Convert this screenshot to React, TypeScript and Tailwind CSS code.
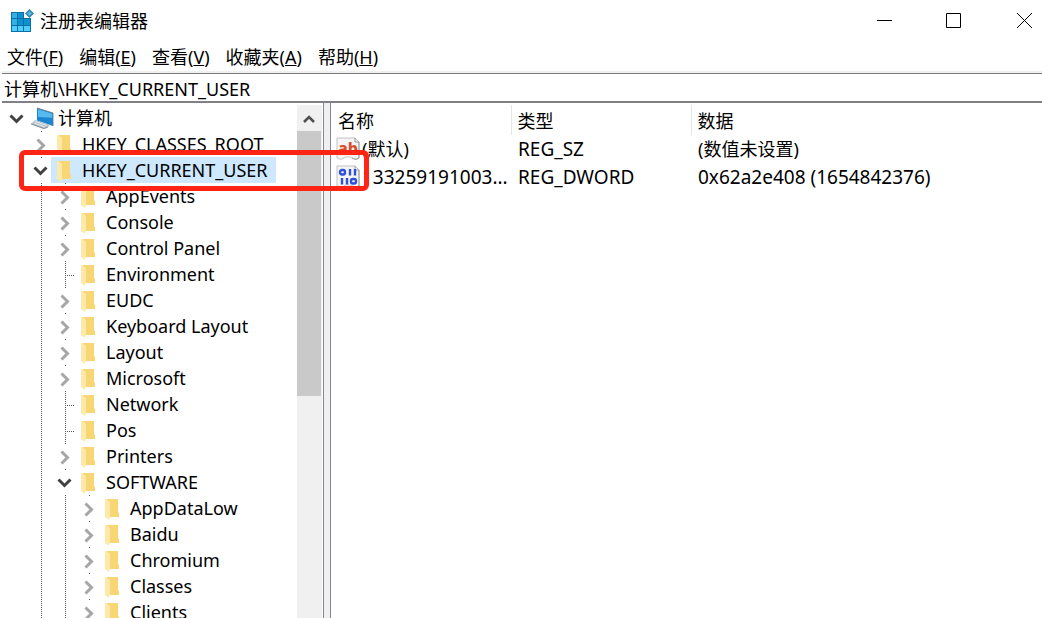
import { useState } from "react";

type TreeNode = {
  name: string;
  level: number;
  state: "open" | "closed" | "leaf";
};

const tree: TreeNode[] = [
  { name: "计算机", level: 0, state: "open" },
  { name: "HKEY_CLASSES_ROOT", level: 1, state: "closed" },
  { name: "HKEY_CURRENT_USER", level: 1, state: "open" },
  { name: "AppEvents", level: 2, state: "closed" },
  { name: "Console", level: 2, state: "closed" },
  { name: "Control Panel", level: 2, state: "closed" },
  { name: "Environment", level: 2, state: "leaf" },
  { name: "EUDC", level: 2, state: "closed" },
  { name: "Keyboard Layout", level: 2, state: "closed" },
  { name: "Layout", level: 2, state: "closed" },
  { name: "Microsoft", level: 2, state: "closed" },
  { name: "Network", level: 2, state: "leaf" },
  { name: "Pos", level: 2, state: "leaf" },
  { name: "Printers", level: 2, state: "closed" },
  { name: "SOFTWARE", level: 2, state: "open" },
  { name: "AppDataLow", level: 3, state: "closed" },
  { name: "Baidu", level: 3, state: "closed" },
  { name: "Chromium", level: 3, state: "closed" },
  { name: "Classes", level: 3, state: "closed" },
  { name: "Clients", level: 3, state: "closed" },
];

const menus = [
  { label: "文件", key: "F" },
  { label: "编辑", key: "E" },
  { label: "查看", key: "V" },
  { label: "收藏夹", key: "A" },
  { label: "帮助", key: "H" },
];

const values = [
  { name: "(默认)", kind: "string", type: "REG_SZ", data: "(数值未设置)" },
  { name: "133259191003...", kind: "binary", type: "REG_DWORD", data: "0x62a2e408 (1654842376)" },
];

function RegistryLogo() {
  return (
    <svg width="24" height="24" viewBox="0 0 24 24" aria-hidden="true">
      <rect x="1" y="3" width="20" height="20" fill="#0b6fa8" />
      <path d="M2 4h5v5H2zM2 10h5v6H2z" fill="#2fb0e6" />
      <path d="M8 4h5v5H8zM8 10h5v6H8zM14 10h6v6h-6z" fill="#0c93cf" />
      <path d="M2 17h5v5H2zM8 17h5v5H8zM14 17h6v5h-6z" fill="#4fcdfb" />
      <path d="M14 2h8v7h-8z" fill="#fff" />
      <path d="M19.500 0L24 4.500 19.500 9 15 4.500z" fill="#2a86b8" />
      <path d="M19.500 2L22 4.500 19.500 7 17 4.500z" fill="#5db4dc" />
    </svg>
  );
}

function ComputerIcon() {
  return (
    <svg width="24" height="24" viewBox="0 0 24 24" aria-hidden="true">
      <path d="M7 2l16 5v13L7 14.500z" fill="#1b86d0" />
      <path d="M8 3.300l14.500 4.500v4L8 11z" fill="#56b9f0" />
      <path d="M7 2l16 5v13" fill="none" stroke="#5b7284" strokeWidth="0.800" />
      <path d="M1 18l4-4 15 5-2 2-4 2z" fill="#b4bfc8" />
      <path d="M1 18l13 4.500 4-1.500" fill="none" stroke="#83909a" />
      <path d="M4 17l11 4M5 15.500l12 4" stroke="#e6ebef" />
    </svg>
  );
}

function FolderIcon() {
  return (
    <svg width="14" height="22" viewBox="0 0 14 22" aria-hidden="true">
      <path d="M2 1h11v13l1 1v4H2z" fill="#f7d673" />
      <path d="M0 1h1l4 3v14l-1 4-4-3z" fill="#ffe9a8" />
    </svg>
  );
}

function PageShape() {
  return (
    <>
      <path d="M1 1h18l4 4v16c-3 2-5 1-7 0s-5-2-8 0-5 1-7 0z" fill="#f5f5f5" stroke="#c2c2c2" />
      <path d="M19 1v4h4M23 5v16c-3 2-5 1-7 0" fill="none" stroke="#9a9a9a" />
    </>
  );
}

function StringIcon() {
  return (
    <svg width="24" height="24" viewBox="0 0 24 24" aria-hidden="true">
      <PageShape />
      <text x="2" y="17" fontSize="16" fontWeight="800" fill="#d8512d">ab</text>
    </svg>
  );
}

function BinaryIcon() {
  return (
    <svg width="24" height="24" viewBox="0 0 24 24" aria-hidden="true">
      <PageShape />
      <g fill="none" stroke="#2f50da" strokeWidth="2.400">
        <rect x="4" y="5" width="5" height="4.500" rx="2" />
        <path d="M14 4v6.500M19 4v6.500M6 13v6.500M11 13v6.500" />
        <rect x="15" y="14" width="5" height="4.500" rx="2" />
      </g>
    </svg>
  );
}

function Branch({ level, state }: { level: number; state: TreeNode["state"] }) {
  return (
    <svg className="shrink-0" width="24" height="26" viewBox="0 0 24 26" aria-hidden="true">
      {state === "leaf" && (
        <path d="M14.500 0v26M16 14.500h10" stroke="#5c5c5c" strokeDasharray="1 1" />
      )}
      {state !== "leaf" && level > 0 && <path d="M14 0h1v1h-1z" fill="#5c5c5c" />}
      {state === "closed" && (
        <path d="M10.500 8.500l6 6-6 6" fill="none" stroke="#a6a6a6" strokeWidth="3" />
      )}
      {state === "open" && (
        <path d="M7.500 10.500l6 6 6-6" fill="none" stroke="#404040" strokeWidth="3" />
      )}
    </svg>
  );
}

function Guide({ dotted }: { dotted: boolean }) {
  return (
    <svg className="shrink-0" width="24" height="26" viewBox="0 0 24 26" aria-hidden="true">
      {dotted && <path d="M14.500 0v26" stroke="#5c5c5c" strokeDasharray="1 1" />}
    </svg>
  );
}

function TreeRow({ node, selected, onSelect }: { node: TreeNode; selected: boolean; onSelect: () => void }) {
  return (
    <li className="flex h-[26px]">
      {Array.from({ length: node.level }, (_, i) => (
        <Guide key={i} dotted={i > 0} />
      ))}
      <Branch level={node.level} state={node.state} />
      <button
        type="button"
        onClick={onSelect}
        className={`flex items-center whitespace-nowrap pr-2 ${selected ? "bg-[#cde8ff]" : ""}`}
      >
        {node.level === 0 ? (
          <span className="w-[31px] shrink-0 pl-[3px]"><ComputerIcon /></span>
        ) : (
          <span className="w-[31px] shrink-0 pl-[6px] pt-[2px]"><FolderIcon /></span>
        )}
        {node.name}
      </button>
    </li>
  );
}

function TitleBar() {
  return (
    <header className="flex h-[41px] shrink-0 items-center justify-between pl-[10px]">
      <h1 className="flex items-center gap-[6px]">
        <RegistryLogo />
        注册表编辑器
      </h1>
      <div className="flex">
        <button type="button" aria-label="最小化" className="flex h-10 w-[69px] items-center justify-center">
          <svg width="15" height="15" viewBox="0 0 15 15"><path d="M0 7.500h15" stroke="#000" /></svg>
        </button>
        <button type="button" aria-label="最大化" className="flex h-10 w-[69px] items-center justify-center">
          <svg width="15" height="15" viewBox="0 0 15 15"><path d="M.5.5h14v14H.5z" fill="none" stroke="#000" /></svg>
        </button>
        <button type="button" aria-label="关闭" className="flex h-10 w-[54px] items-center justify-end pr-[10px]">
          <svg width="15" height="15" viewBox="0 0 15 15"><path d="M0 0l15 15M15 0L0 15" stroke="#000" /></svg>
        </button>
      </div>
    </header>
  );
}

export default function App() {
  const [selected, setSelected] = useState("HKEY_CURRENT_USER");
  const [address, setAddress] = useState("计算机\\HKEY_CURRENT_USER");

  return (
    <div className="flex h-screen flex-col overflow-hidden bg-white font-['Noto_Sans','Noto_Sans_CJK_SC',sans-serif] text-[18px] leading-[26px] text-black">
      <TitleBar />
      <nav className="flex h-[30px] shrink-0 items-center gap-4 pl-[7px] pt-[2px]">
        {menus.map((menu) => (
          <button key={menu.key} type="button" className="whitespace-nowrap">
            {menu.label}(<span className="underline">{menu.key}</span>)
          </button>
        ))}
      </nav>
      <div className="ml-[2px] shrink-0 border-t-2 border-[#f0f0f0]">
        <input
          aria-label="地址"
          value={address}
          onChange={(e) => setAddress(e.target.value)}
          className="block h-[30px] w-full border-t border-b-2 border-t-[#7a7a7a] border-b-[#828087] px-[2px] outline-none"
        />
      </div>
      <main className="relative flex min-h-0 flex-1">
        <aside className="flex w-[324px] shrink-0 border-r border-[#828790] pl-[3px] pr-[1px] pt-[2px]">
          <ul className="min-w-0 flex-1 overflow-hidden">
            {tree.map((node) => (
              <TreeRow
                key={node.name}
                node={node}
                selected={node.name === selected}
                onSelect={() => setSelected(node.name)}
              />
            ))}
          </ul>
          <div className="flex w-[25px] shrink-0 flex-col bg-[#f0f0f0] pr-[1px]">
            <button type="button" aria-label="向上滚动" className="flex h-[26px] items-center justify-center pt-[2px]">
              <svg width="12" height="10" viewBox="0 0 12 10"><path d="M1 8l5-5 5 5" fill="none" stroke="#505050" strokeWidth="2.600" /></svg>
            </button>
            <div className="h-[265px] bg-[#c9c9c9]" />
          </div>
        </aside>
        <div className="w-[7px] shrink-0 border-r border-[#828790] bg-[#f0f0f0]" />
        <section className="min-w-0 flex-1 pt-[2px]">
          <table className="w-full table-fixed text-left">
            <thead>
              <tr className="h-[30px]">
                <th className="w-[180px] border-r border-[#e5e5e5] pl-[7px] pt-[2px] font-normal">名称</th>
                <th className="w-[180px] border-r border-[#e5e5e5] pl-[6px] pt-[2px] font-normal">类型</th>
                <th className="pl-[6px] pt-[2px] font-normal">数据</th>
              </tr>
            </thead>
            <tbody>
              {values.map((value) => (
                <tr key={value.name} className="h-[28px] whitespace-nowrap">
                  <td className="pl-[5px]">
                    <span className="flex items-center gap-[2px]">
                      {value.kind === "string" ? <StringIcon /> : <BinaryIcon />}
                      <span className={value.kind === "binary" ? "text-[19px]" : ""}>{value.name}</span>
                    </span>
                  </td>
                  <td className="pl-[7px] text-[19px]">{value.type}</td>
                  <td className={value.kind === "binary" ? "pl-[7px] text-[19px]" : "pl-[7px]"}>{value.data}</td>
                </tr>
              ))}
            </tbody>
          </table>
        </section>
        <div className="pointer-events-none absolute left-[19px] top-[47px] h-[41px] w-[350px] rounded-md border-[5px] border-[#ff2414]" />
      </main>
    </div>
  );
}
